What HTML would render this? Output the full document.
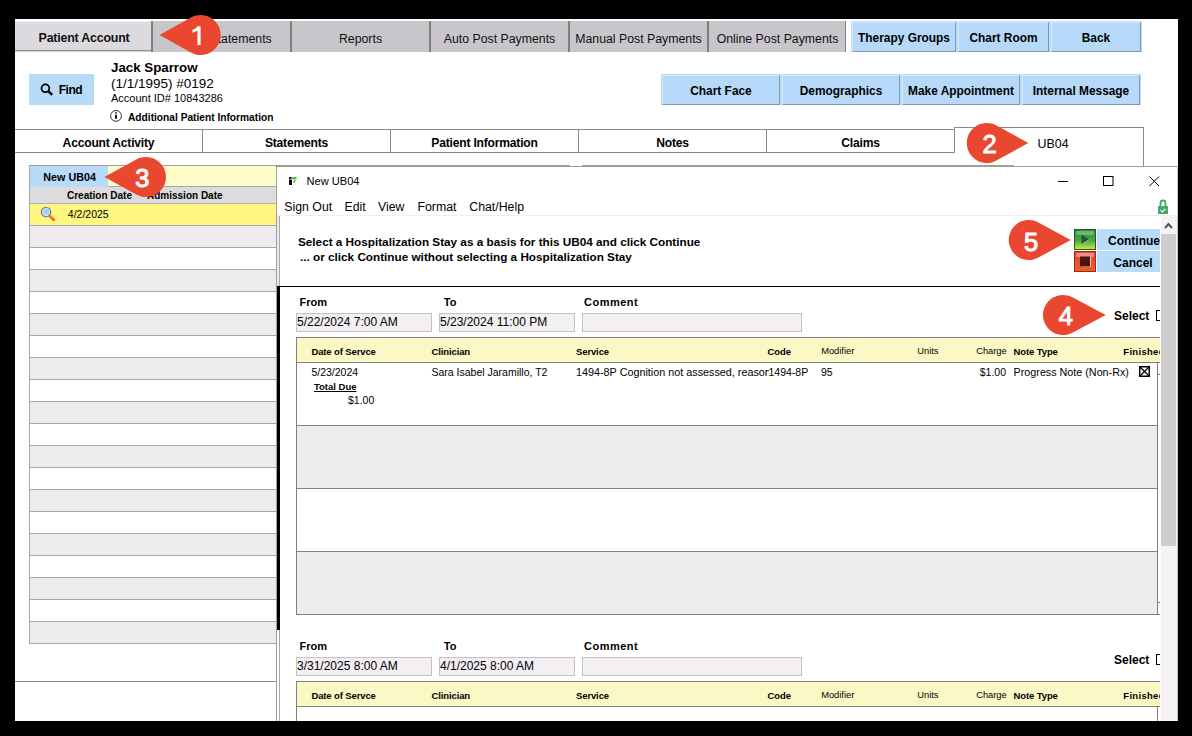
<!DOCTYPE html>
<html><head><meta charset="utf-8">
<style>
*{margin:0;padding:0;box-sizing:border-box}
html,body{width:1192px;height:736px;overflow:hidden;background:#000;font-family:"Liberation Sans",sans-serif;color:#000;position:relative}
.a{position:absolute;white-space:nowrap}
.tab{position:absolute;top:21px;height:31px;background:#c8c6ca;font-size:12px;line-height:31px;color:#111}
.sep{position:absolute;top:21px;width:2px;height:31px;background:#7f7f7f}
.btn{position:absolute;background:#b6d9f9;border-left:1px solid #d4eafc;border-top:1px solid #d4eafc;border-right:1px solid #8196ab;border-bottom:1px solid #8196ab;line-height:30px;font-weight:bold;font-size:11.9px;text-align:center;color:#000}
.st{position:absolute;top:129px;height:24px;border-top:1px solid #8a8a8a;border-bottom:1px solid #8a8a8a;border-right:1px solid #8a8a8a;font-weight:bold;font-size:11.4px;line-height:22px;text-align:center}
.lr{position:absolute;left:29px;width:248px;height:22px;border-bottom:1px solid #a8a8a8}
.g{background:#eeebee}
.hl{position:absolute;height:1px;background:#808080}
.vl{position:absolute;width:1px;background:#808080}
.lbl{position:absolute;font-weight:bold;font-size:11px}
.inp{position:absolute;height:19px;background:#f3eff3;border:1px solid #c3c3c3;font-size:12px;line-height:17px;padding-left:0px}
.th{position:absolute;font-weight:bold;font-size:9.5px;letter-spacing:-0.12px;margin-top:0.7px}
.thn{position:absolute;font-size:9.3px;margin-top:1.2px}
.td{position:absolute;font-size:10.5px}
</style></head><body>
<!-- app white -->
<div class="a" style="left:15px;top:19px;width:1163px;height:702px;background:#fff"></div>

<!-- top tabs -->
<div class="tab" style="left:15px;width:136px;top:21px;height:29px;background:#dcdade;border-top:1px solid #efedf0"></div>
<div class="a" style="left:15px;top:50px;width:136px;height:1px;background:#8e8e8e"></div>
<div class="a" style="left:15px;top:51px;width:136px;height:1px;background:#d2d2d2"></div>
<div class="a" style="left:38.6px;top:32.5px;font-weight:bold;font-size:12.4px;letter-spacing:-0.2px;line-height:11px;color:#111">Patient Account</div>
<div class="tab" style="left:153px;width:693px"></div>
<div class="sep" style="left:151px"></div>
<div class="sep" style="left:290px"></div>
<div class="sep" style="left:429px"></div>
<div class="sep" style="left:568px"></div>
<div class="sep" style="left:707px"></div>
<div class="sep" style="left:845px;width:1px"></div>
<div class="a" style="left:209.5px;top:32px;font-size:12.3px;line-height:14px;color:#111">Statements</div>
<div class="a" style="left:292px;width:137px;top:32px;font-size:12.3px;line-height:14px;text-align:center;color:#111">Reports</div>
<div class="a" style="left:431px;width:137px;top:32px;font-size:12.3px;line-height:14px;text-align:center;color:#111">Auto Post Payments</div>
<div class="a" style="left:570px;width:137px;top:32px;font-size:12.3px;line-height:14px;text-align:center;color:#111">Manual Post Payments</div>
<div class="a" style="left:709px;width:137px;top:32px;font-size:12.3px;line-height:14px;text-align:center;color:#111">Online Post Payments</div>


<div class="a" style="left:851px;top:21px;width:291px;height:31px;background:#bcdcfa"></div>
<div class="btn" style="left:852px;top:22px;width:104px;height:30px">Therapy Groups</div>
<div class="btn" style="left:958px;top:22px;width:91px;height:30px">Chart Room</div>
<div class="btn" style="left:1051px;top:22px;width:90px;height:30px">Back</div>

<!-- patient info -->
<div class="a" style="left:29px;top:74px;width:65px;height:31px;background:#b8dbfa"></div>
<svg class="a" style="left:38.3px;top:82px" width="16" height="16" viewBox="0 0 16 16"><circle cx="7.4" cy="6.3" r="3.9" fill="none" stroke="#000" stroke-width="1.7"/><path d="M10.2 9.1 L14.2 12.9" stroke="#000" stroke-width="2.5"/></svg>
<div class="a" style="left:58.7px;top:83.5px;font-weight:bold;font-size:12px;letter-spacing:-0.45px;line-height:12px">Find</div>
<div class="a" style="left:111px;top:60.7px;font-weight:bold;font-size:13.3px;line-height:14px">Jack Sparrow</div>
<div class="a" style="left:111px;top:76px;font-size:13.5px;line-height:15px">(1/1/1995) #0192</div>
<div class="a" style="left:111px;top:92px;font-size:11px;line-height:13px">Account ID# 10843286</div>
<svg class="a" style="left:109px;top:109px" width="14" height="14" viewBox="0 0 14 14"><circle cx="7" cy="6.9" r="5.4" fill="none" stroke="#333" stroke-width="1"/><rect x="6" y="3.2" width="2" height="1.5" fill="#444"/><rect x="6" y="5.8" width="2" height="4" fill="#111"/></svg>
<div class="a" style="left:128px;top:111.5px;font-weight:bold;font-size:10.2px;line-height:12px">Additional Patient Information</div>


<div class="a" style="left:661px;top:74px;width:480px;height:31px;background:#bcdcfa"></div>
<div class="btn" style="left:662px;top:75px;width:118px;height:30px">Chart Face</div>
<div class="btn" style="left:782px;top:75px;width:118px;height:30px">Demographics</div>
<div class="btn" style="left:902px;top:75px;width:118px;height:30px">Make Appointment</div>
<div class="btn" style="left:1022px;top:75px;width:118px;height:30px">Internal Message</div>

<!-- sub tabs -->
<div class="a" style="left:15px;top:129px;width:939px;height:1px;background:#8a8a8a"></div>
<div class="a" style="left:15px;top:152px;width:939px;height:1px;background:#8a8a8a"></div>
<div class="vl" style="left:202px;top:129px;height:24px;background:#8a8a8a"></div>
<div class="vl" style="left:390px;top:129px;height:24px;background:#8a8a8a"></div>
<div class="vl" style="left:578px;top:129px;height:24px;background:#8a8a8a"></div>
<div class="vl" style="left:766px;top:129px;height:24px;background:#8a8a8a"></div>
<div class="vl" style="left:954px;top:127px;height:26px;background:#8a8a8a"></div>
<div class="a" style="left:954px;top:127px;width:190px;height:1px;background:#8a8a8a"></div>
<div class="vl" style="left:1143px;top:127px;height:39px;background:#8a8a8a"></div>
<div class="a" style="left:15px;width:187px;top:136px;font-weight:bold;font-size:12.1px;letter-spacing:-0.2px;line-height:14px;text-align:center">Account Activity</div>
<div class="a" style="left:203px;width:187px;top:136px;font-weight:bold;font-size:12.1px;letter-spacing:-0.2px;line-height:14px;text-align:center">Statements</div>
<div class="a" style="left:391px;width:187px;top:136px;font-weight:bold;font-size:12.1px;letter-spacing:-0.2px;line-height:14px;text-align:center">Patient Information</div>
<div class="a" style="left:579px;width:187px;top:136px;font-weight:bold;font-size:12.1px;letter-spacing:-0.2px;line-height:14px;text-align:center">Notes</div>
<div class="a" style="left:767px;width:187px;top:136px;font-weight:bold;font-size:12.1px;letter-spacing:-0.2px;line-height:14px;text-align:center">Claims</div>
<div class="a" style="left:1037.6px;top:137px;font-size:12.4px;line-height:14px">UB04</div>

<!-- left panel -->
<div class="a" style="left:29px;top:165px;width:985px;height:1px;background:#a0a0a0"></div>
<div class="a" style="left:108px;top:166px;width:906px;height:21px;background:#fdfbc8"></div>
<div class="a" style="left:29px;top:166px;width:79px;height:21px;background:#b8dbfa"></div>
<div class="a" style="left:108px;top:186px;width:906px;height:1px;background:#a8a8a8"></div>
<div class="a" style="left:570px;top:165px;width:12px;height:22px;background:#fff"></div>
<div class="a" style="left:43.2px;top:171px;font-weight:bold;font-size:10.8px;line-height:12px">New UB04</div>
<div class="a" style="left:29px;top:187px;width:248px;height:17px;background:#dddbde"></div>
<div class="a" style="left:67px;top:190px;font-weight:bold;font-size:10px;line-height:12px">Creation Date</div>
<div class="a" style="left:147px;top:190px;font-weight:bold;font-size:10px;line-height:12px">Admission Date</div>
<div class="lr" style="top:204px;height:22px;background:#fff680"></div>
<div class="a" style="left:29px;top:203px;width:248px;height:1px;background:#b0b0b8"></div>
<svg class="a" style="left:38px;top:204px" width="20" height="20" viewBox="0 0 20 20"><defs><radialGradient id="lg" cx="0.5" cy="0.45" r="0.6"><stop offset="0" stop-color="#8cc4f4"/><stop offset="0.6" stop-color="#b8dcfa"/><stop offset="1" stop-color="#e8f4ff"/></radialGradient><linearGradient id="hg" x1="0" y1="0" x2="1" y2="0"><stop offset="0" stop-color="#e8501c"/><stop offset="1" stop-color="#f8b830"/></linearGradient></defs><path d="M11.5 11.5 L15.8 15.8" stroke="#e8601c" stroke-width="2.8" stroke-linecap="round"/><path d="M12.3 11.3 L15.6 14.6" stroke="#f8c040" stroke-width="1" stroke-linecap="round"/><circle cx="8" cy="8" r="4.7" fill="url(#lg)" stroke="#6d7d8c" stroke-width="1.1"/></svg>
<div class="a" style="left:67.8px;top:209px;font-size:10.5px;line-height:11px">4/2/2025</div>
<div id="rows">
<div class="lr g" style="top:226px"></div>
<div class="lr" style="top:248px"></div>
<div class="lr g" style="top:270px"></div>
<div class="lr" style="top:292px"></div>
<div class="lr g" style="top:314px"></div>
<div class="lr" style="top:336px"></div>
<div class="lr g" style="top:358px"></div>
<div class="lr" style="top:380px"></div>
<div class="lr g" style="top:402px"></div>
<div class="lr" style="top:424px"></div>
<div class="lr g" style="top:446px"></div>
<div class="lr" style="top:468px"></div>
<div class="lr g" style="top:490px"></div>
<div class="lr" style="top:512px"></div>
<div class="lr g" style="top:534px"></div>
<div class="lr" style="top:556px"></div>
<div class="lr g" style="top:578px"></div>
<div class="lr" style="top:600px"></div>
<div class="lr g" style="top:622px"></div>
</div>
<div class="vl" style="left:29px;top:165px;height:479px;background:#a8a8a8"></div>
<div class="a" style="left:15px;top:681px;width:262px;height:1px;background:#8a8a8a"></div>

<!-- modal window -->
<div class="a" style="left:276px;top:167px;width:902px;height:554px;background:#fff"></div>
<div class="a" style="left:276px;top:166px;width:902px;height:1px;background:rgba(80,80,80,0.55)"></div>
<div class="a" style="left:276px;top:166px;width:1px;height:555px;background:rgba(80,80,80,0.55)"></div>
<div class="a" style="left:1177px;top:166px;width:1px;height:555px;background:#c8c8c8"></div>
<!-- title -->
<svg class="a" style="left:284px;top:172px" width="20" height="18" viewBox="0 0 20 18"><rect x="5" y="8" width="3" height="5" fill="#000"/><rect x="5" y="5" width="2.5" height="2.5" fill="#111"/><path d="M8 5 H13 L12 7.5 H8z" fill="#48c848"/><path d="M9 10.5 L11 8 L11.5 8.5 L10 10.5z" fill="#111"/></svg>
<div class="a" style="left:306.5px;top:175px;font-size:11.1px;line-height:13px">New UB04</div>
<svg class="a" style="left:1050px;top:170px" width="120" height="22" viewBox="0 0 120 22"><path d="M8 11.5 H18" stroke="#000" stroke-width="1"/><rect x="53.5" y="6.5" width="9.5" height="9" fill="none" stroke="#000" stroke-width="1"/><path d="M99.5 6.5 L109 16 M109 6.5 L99.5 16" stroke="#000" stroke-width="1"/></svg>
<!-- menu -->
<div class="a" style="left:284.3px;top:200px;font-size:12.3px;line-height:14px">Sign Out</div>
<div class="a" style="left:344.5px;top:200px;font-size:12.3px;line-height:14px">Edit</div>
<div class="a" style="left:378px;top:200px;font-size:12.3px;line-height:14px">View</div>
<div class="a" style="left:417.5px;top:200px;font-size:12.3px;line-height:14px">Format</div>
<div class="a" style="left:469.3px;top:200px;font-size:12.3px;line-height:14px">Chat/Help</div>
<svg class="a" style="left:1156px;top:198px" width="14" height="18" viewBox="0 0 14 18"><path d="M4.5 8.5 V5 A2.5 2.5 0 0 1 9.5 5 V8.5" fill="none" stroke="#45a86a" stroke-width="1.8"/><rect x="2" y="8" width="10" height="8" fill="#45a86a"/><path d="M4.5 12.2 L6.3 14 L9.5 10.8" fill="none" stroke="#fff" stroke-width="1.1"/></svg>
<div class="a" style="left:277px;top:215px;width:900px;height:1px;background:#f0ecf0"></div>

<!-- left strip -->
<div class="a" style="left:277px;top:216px;width:2px;height:70px;background:#ebe7eb"></div>
<div class="vl" style="left:279px;top:216px;height:70px;background:#a8a8a8"></div>
<div class="a" style="left:277px;top:286px;width:3px;height:344px;background:#000"></div>
<div class="vl" style="left:279px;top:630px;height:91px;background:#a8a8a8"></div>

<!-- header text -->
<div class="a" style="left:298px;top:235px;font-weight:bold;font-size:11.74px;line-height:14px">Select a Hospitalization Stay as a basis for this UB04 and click Continue</div>
<div class="a" style="left:300px;top:250px;font-weight:bold;font-size:11.74px;line-height:14px">... or click Continue without selecting a Hospitalization Stay</div>

<!-- continue/cancel -->
<svg class="a" style="left:1074px;top:229px" width="22" height="43" viewBox="0 0 22 43"><defs><linearGradient id="gg" x1="0" y1="0" x2="0" y2="1"><stop offset="0" stop-color="#2e8a3c"/><stop offset="0.55" stop-color="#49a844"/><stop offset="1" stop-color="#c9ee3a"/></linearGradient><linearGradient id="rg" x1="0" y1="0" x2="0" y2="1"><stop offset="0" stop-color="#e8462e"/><stop offset="1" stop-color="#ec5e2a"/></linearGradient></defs><rect x="0.5" y="0.5" width="21" height="20" fill="url(#gg)" stroke="#1f5a28"/><rect x="2" y="2" width="18" height="4" rx="2" fill="#7cc27e" opacity="0.8"/><path d="M7.5 5.5 L15.5 10.5 L7.5 15.5z" fill="#1f5a3a"/><rect x="0.5" y="22.5" width="21" height="20" fill="url(#rg)" stroke="#9a2a18"/><rect x="2" y="24" width="18" height="4" rx="2" fill="#f4a0a0" opacity="0.8"/><path d="M7 37.5 H16.5 V28" fill="none" stroke="#f4c8b0" stroke-width="1"/><rect x="6" y="27.5" width="10" height="10" fill="#4a1410"/><path d="M7.5 15.5 L15.5 10.5" stroke="#b8e0a0" stroke-width="0.8"/></svg>
<div class="a" style="left:1097px;top:229px;width:63px;height:21px;background:#b8dbfa;font-weight:bold;font-size:12px;line-height:24px;text-align:right;padding-right:0px">Continue</div>
<div class="a" style="left:1097px;top:251px;width:63px;height:21px;background:#b8dbfa;font-weight:bold;font-size:12px;line-height:24px;text-align:center;padding-left:9px">Cancel</div>

<div class="a" style="left:280px;top:286px;width:880px;height:1px;background:#000"></div>

<!-- scrollbar -->
<div class="a" style="left:1161px;top:216px;width:16px;height:505px;background:#f5f1f5"></div>
<svg class="a" style="left:1161px;top:216px" width="16" height="17" viewBox="0 0 16 17"><path d="M4 12 L7.5 8 L11 12" fill="none" stroke="#555" stroke-width="2"/></svg>
<div class="a" style="left:1161px;top:234px;width:15px;height:312px;background:#cdcdcd"></div>

<!-- section 1 -->
<div id="sec1" class="a" style="left:0;top:0;width:1160px;height:721px;overflow:hidden">
<div class="lbl" style="left:299.5px;top:296px;line-height:12px">From</div>
<div class="lbl" style="left:443.8px;top:296px;line-height:12px">To</div>
<div class="lbl" style="left:584px;top:296px;line-height:12px;letter-spacing:0.5px">Comment</div>
<div class="inp" style="left:296px;top:313px;width:136px">5/22/2024 7:00 AM</div>
<div class="inp" style="left:439px;top:313px;width:136px">5/23/2024 11:00 PM</div>
<div class="inp" style="left:582px;top:313px;width:220px"></div>
<div class="a" style="left:1114px;top:310px;font-weight:bold;font-size:12px;line-height:13px">Select</div>
<div class="a" style="left:1156px;top:310px;width:10px;height:11px;border:1px solid #000"></div>

<div class="a" style="left:296px;top:337px;width:870px;height:26px;background:#fcf8c6;border-top:1px solid #808080;border-bottom:1px solid #808080;border-left:1px solid #808080"></div>
<div class="th" style="left:311.4px;top:345px;line-height:11px">Date of Servce</div>
<div class="th" style="left:431.5px;top:345px;line-height:11px">Clinician</div>
<div class="th" style="left:576px;top:345px;line-height:11px">Service</div>
<div class="th" style="left:767.6px;top:345px;line-height:11px">Code</div>
<div class="thn" style="left:821.2px;top:345px;line-height:11px">Modifier</div>
<div class="thn" style="left:917.3px;top:345px;line-height:11px">Units</div>
<div class="thn" style="left:976.2px;top:345px;line-height:11px">Charge</div>
<div class="th" style="left:1013.6px;top:345px;line-height:11px">Note Type</div>
<div class="th" style="left:1123.3px;top:345px;line-height:11px;letter-spacing:0.3px">Finished</div>

<div class="vl" style="left:296px;top:337px;height:278px"></div>
<div class="vl" style="left:1157px;top:363px;height:251px"></div>
<div class="hl" style="left:1158px;top:374px;width:2px"></div>
<div class="hl" style="left:1158px;top:602px;width:2px"></div>
<div class="a" style="left:297px;top:426px;width:860px;height:62px;background:#eeebee"></div>
<div class="a" style="left:297px;top:552px;width:860px;height:62px;background:#eeebee"></div>
<div class="hl" style="left:296px;top:425px;width:862px"></div>
<div class="hl" style="left:296px;top:488px;width:862px"></div>
<div class="hl" style="left:296px;top:551px;width:862px"></div>
<div class="hl" style="left:296px;top:614px;width:864px"></div>

<div class="td" style="left:311.4px;top:366px;line-height:12px">5/23/2024</div>
<div class="a" style="left:313.9px;top:381px;font-weight:bold;font-size:9.5px;line-height:11px;text-decoration:underline">Total Due</div>
<div class="td" style="left:348px;top:394px;line-height:12px">$1.00</div>
<div class="td" style="left:431.5px;top:366px;line-height:12px">Sara Isabel Jaramillo, T2</div>
<div class="a" style="left:576px;top:366px;width:193px;overflow:hidden;font-size:10.8px;line-height:12px">1494-8P Cognition not assessed, reason not otherwise specified</div>
<div class="td" style="left:768.5px;top:366px;line-height:12px">1494-8P</div>
<div class="td" style="left:821px;top:366px;line-height:12px">95</div>
<div class="td" style="left:906px;width:100px;top:366px;line-height:12px;text-align:right">$1.00</div>
<div class="td" style="left:1013.6px;top:366px;line-height:12px;font-size:10.75px">Progress Note (Non-Rx)</div>
<svg class="a" style="left:1139px;top:366px" width="11" height="11" viewBox="0 0 11 11"><rect x="0.75" y="0.75" width="9.5" height="9.5" fill="none" stroke="#000" stroke-width="1.5"/><path d="M1 1 L10 10 M10 1 L1 10" stroke="#000" stroke-width="1.2"/></svg>

<!-- section 2 -->
<div class="lbl" style="left:299.5px;top:640px;line-height:12px">From</div>
<div class="lbl" style="left:443.8px;top:640px;line-height:12px">To</div>
<div class="lbl" style="left:584px;top:640px;line-height:12px;letter-spacing:0.5px">Comment</div>
<div class="inp" style="left:296px;top:657px;width:136px">3/31/2025 8:00 AM</div>
<div class="inp" style="left:439px;top:657px;width:136px">4/1/2025 8:00 AM</div>
<div class="inp" style="left:582px;top:657px;width:220px"></div>
<div class="a" style="left:1114px;top:653.7px;font-weight:bold;font-size:12px;line-height:13px">Select</div>
<div class="a" style="left:1156px;top:654px;width:10px;height:11px;border:1px solid #000"></div>
<div class="a" style="left:296px;top:681px;width:870px;height:26px;background:#fcf8c6;border-top:1px solid #808080;border-bottom:1px solid #808080;border-left:1px solid #808080"></div>
<div class="th" style="left:311.4px;top:689px;line-height:11px">Date of Servce</div>
<div class="th" style="left:431.5px;top:689px;line-height:11px">Clinician</div>
<div class="th" style="left:576px;top:689px;line-height:11px">Service</div>
<div class="th" style="left:767.6px;top:689px;line-height:11px">Code</div>
<div class="thn" style="left:821.2px;top:689px;line-height:11px">Modifier</div>
<div class="thn" style="left:917.3px;top:689px;line-height:11px">Units</div>
<div class="thn" style="left:976.2px;top:689px;line-height:11px">Charge</div>
<div class="th" style="left:1013.6px;top:689px;line-height:11px">Note Type</div>
<div class="th" style="left:1123.3px;top:689px;line-height:11px;letter-spacing:0.3px">Finished</div>
<div class="vl" style="left:296px;top:681px;height:40px"></div>
<div class="vl" style="left:1157px;top:707px;height:14px"></div>
</div>

<!-- callouts -->
<svg class="a" style="left:0;top:0" width="1192" height="736" viewBox="0 0 1192 736">
<g fill="#e9472f">
<path d="M159.5 35.0 L190.87 17.53 A20 20 0 1 1 190.87 52.47 Z"/>
<path d="M1028.3 143.0 L996.44 160.52 A20 20 0 1 1 996.44 125.48 Z"/>
<path d="M104.4 177.0 L136.26 159.48 A20 20 0 1 1 136.26 194.52 Z"/>
<path d="M1105.7 315.0 L1072.37 332.67 A20 20 0 1 1 1072.37 297.33 Z"/>
<path d="M1070.7 240.0 L1038.35 257.57 A20 20 0 1 1 1038.35 222.43 Z"/>
</g>
<g fill="#fff" stroke="#fff" stroke-width="1" font-family="Liberation Sans" font-weight="normal" font-size="25.5" text-anchor="middle">

<text x="989.7" y="153">2</text>
<text x="142.3" y="187.2">3</text>
<text x="1065.9" y="325">4</text>
<text x="1031.2" y="250.6">5</text>
</g>
<path d="M197.5 26.2 H200.6 V45 H197.5 V30.6 C196.1 31.6 194.3 32.4 192.4 32.8 V29.9 C194.6 29.2 196.5 27.9 197.5 26.2 Z" fill="#fff"/>
</svg>
</body></html>
